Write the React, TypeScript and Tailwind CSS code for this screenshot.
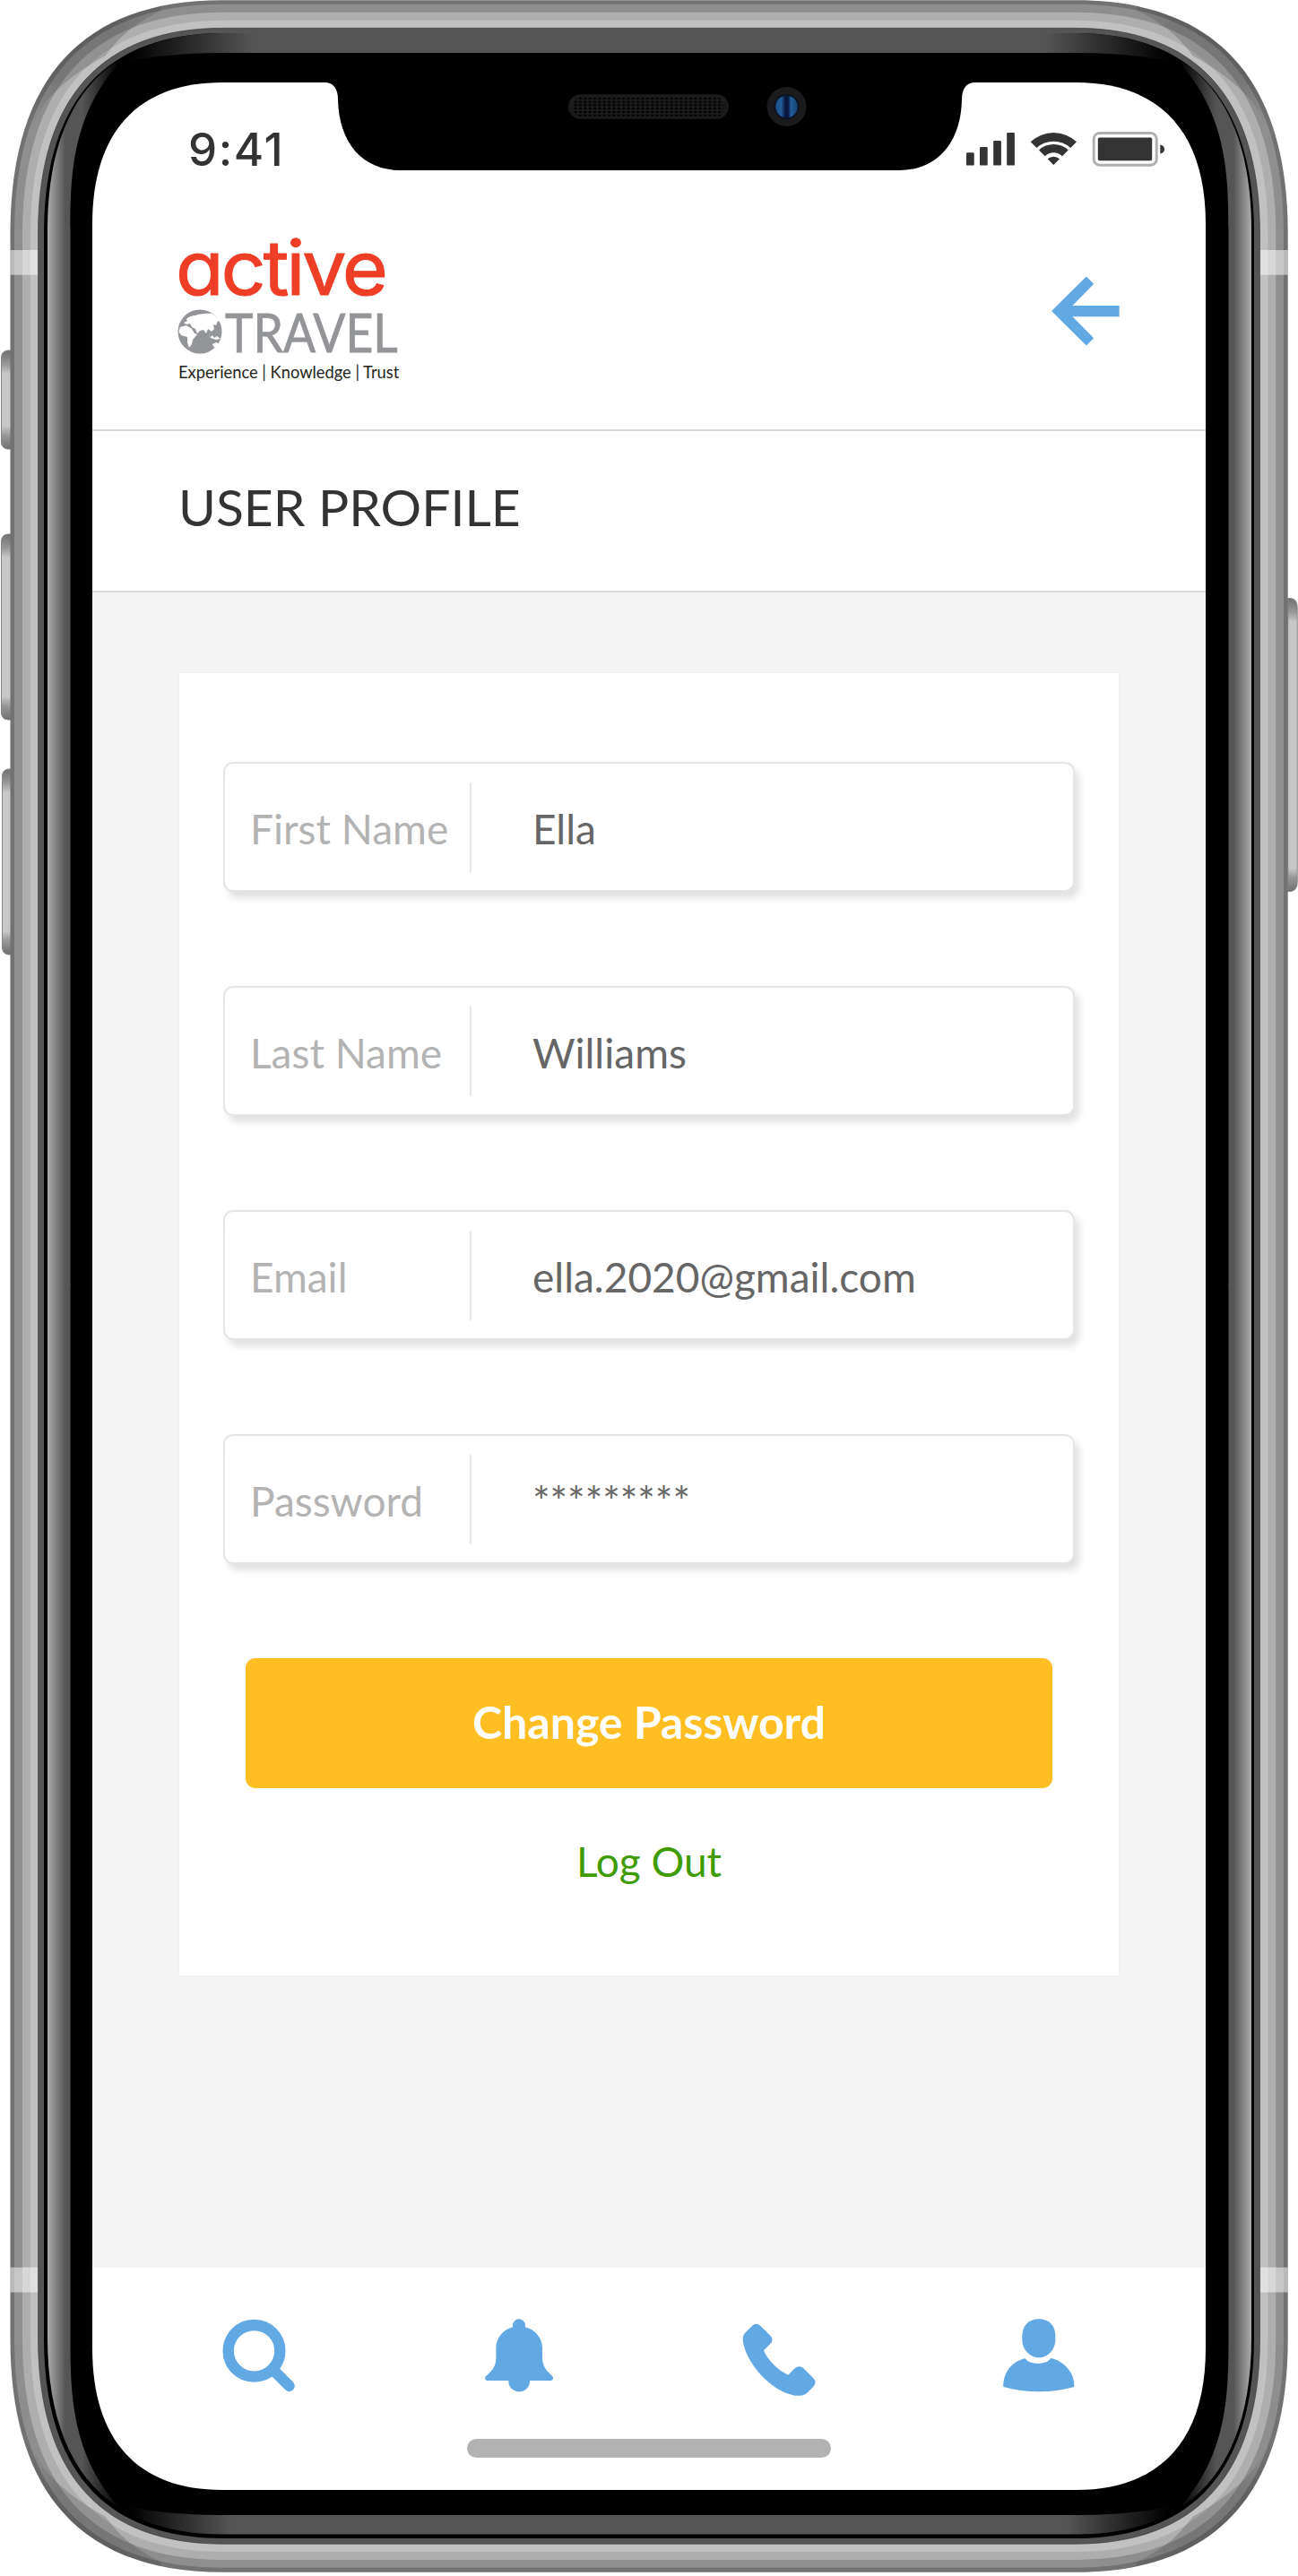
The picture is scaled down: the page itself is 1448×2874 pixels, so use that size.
import React from "react";

const BLUE = "#62a8e5";

/** Builds a rounded-rectangle path with smooth, continuous corners. */
function smoothRect(x0: number, y0: number, x1: number, y1: number, ex: number, ey: number, k = 0.66) {
  const a = ex * (1 - k);
  const b = ey * (1 - k);
  return [
    `M${x0 + ex} ${y0}H${x1 - ex}`,
    `C${x1 - a} ${y0} ${x1} ${y0 + b} ${x1} ${y0 + ey}`,
    `V${y1 - ey}`,
    `C${x1} ${y1 - b} ${x1 - a} ${y1} ${x1 - ex} ${y1}`,
    `H${x0 + ex}`,
    `C${x0 + a} ${y1} ${x0} ${y1 - b} ${x0} ${y1 - ey}`,
    `V${y0 + ey}`,
    `C${x0} ${y0 + b} ${x0 + a} ${y0} ${x0 + ex} ${y0}Z`,
  ].join("");
}

const OUTER = smoothRect(11.5, 0.3, 1436.7, 2869.7, 236, 260);
const GLOSS = smoothRect(53, 37, 1396, 2827.5, 196, 220);
const SIDE = "M78.5 1435V260C78.5 195 80 128 135 68H30V1435Z";
const CAP = "M724 59H245C205 59 165 63 135 70V20H724Z";

function SideButton({ x, y, h, flip }: { x: number; y: number; h: number; flip?: boolean }) {
  const d = flip
    ? `M${x} ${y}h3q7.5 1 7.5 10v${h - 20}q0 9-7.5 10h-3Z`
    : `M${x + 11} ${y}h-4q-7 1-7 8v${h - 16}q0 7 7 8h4Z`;
  const edge = 26 / h;
  const id = `btn${x}-${y}`.replace(/\./g, "_");
  return (
    <g>
      <defs>
        <linearGradient id={id} x1="0" y1="0" x2="0" y2="1">
          <stop offset="0" stopColor="#707070" />
          <stop offset={edge * 0.6} stopColor="#989898" />
          <stop offset={edge} stopColor="#c8c8c8" />
          <stop offset={1 - edge} stopColor="#c8c8c8" />
          <stop offset={1 - edge * 0.6} stopColor="#989898" />
          <stop offset="1" stopColor="#707070" />
        </linearGradient>
      </defs>
      <path d={d} fill={`url(#${id})`} stroke="#858585" strokeWidth="1" />
    </g>
  );
}

function PhoneFrame() {
  return (
    <svg className="absolute inset-0" width="1448" height="2874" viewBox="0 0 1448 2874" aria-hidden="true">
      <defs>
        <clipPath id="outer"><path d={OUTER} /></clipPath>
        <clipPath id="gloss"><path d={GLOSS} /></clipPath>
        <linearGradient id="side" gradientUnits="userSpaceOnUse" x1="53" x2="133" y1="0" y2="0">
          <stop offset="0" stopColor="#ababab" />
          <stop offset="0.25" stopColor="#555" />
          <stop offset="0.48" stopColor="#555" />
          <stop offset="1" stopColor="#000" />
        </linearGradient>
        <linearGradient id="cap" gradientUnits="userSpaceOnUse" x1="145" x2="283" y1="0" y2="0">
          <stop offset="0" stopColor="#000" />
          <stop offset="1" stopColor="#555" />
        </linearGradient>
        <linearGradient id="capLow" gradientUnits="userSpaceOnUse" x1="145" x2="258" y1="0" y2="0">
          <stop offset="0" stopColor="#000" />
          <stop offset="1" stopColor="#555" />
        </linearGradient>
        <linearGradient id="shade" gradientUnits="userSpaceOnUse" x1="178" y1="10" x2="34" y2="142">
          <stop offset="0" stopColor="#000" stopOpacity="0.1" />
          <stop offset="0.25" stopColor="#000" stopOpacity="0.17" />
          <stop offset="0.7" stopColor="#000" stopOpacity="0.16" />
          <stop offset="1" stopColor="#000" stopOpacity="0" />
        </linearGradient>
        <linearGradient id="lens">
          <stop offset="0" stopColor="#184c82" />
          <stop offset="0.25" stopColor="#225d9b" />
          <stop offset="0.45" stopColor="#08133a" />
          <stop offset="0.58" stopColor="#0a1a48" />
          <stop offset="0.7" stopColor="#225d9b" />
          <stop offset="1" stopColor="#153f70" />
        </linearGradient>
        <pattern id="mesh" width="5.35" height="3.77" patternUnits="userSpaceOnUse" x="639.5" y="108">
          <rect width="3.2" height="2" x="1" y="0.9" fill="#000" />
        </pattern>
        <path
          id="cornerShade"
          d="M180 12C150 26 132 42 118 62C96 74 76 88 60 104C46 118 40 130 34 145L0 145V0H180Z"
          fill="url(#shade)"
        />
      </defs>

      <SideButton x={1.5} y={391} h={110} />
      <SideButton x={1.5} y={596} h={207} />
      <SideButton x={2.5} y={858} h={207} />
      <SideButton x={1436.7} y={667.5} h={327} flip />

      <path d={OUTER} fill="#727272" />
      <path d={smoothRect(16, 4.7, 1432, 2864.7, 232, 256)} fill="#8e8e8e" />
      <path d={smoothRect(25, 13.7, 1423.3, 2856, 224, 248)} fill="#aeaeae" />
      <path d={smoothRect(34, 22.8, 1414.5, 2847, 216, 240)} fill="#c1c1c1" />
      <g clipPath="url(#outer)">
        <use href="#cornerShade" />
        <use href="#cornerShade" transform="matrix(-1 0 0 1 1448.2 0)" />
        <use href="#cornerShade" transform="matrix(1 0 0 -1 0 2870)" />
        <use href="#cornerShade" transform="matrix(-1 0 0 -1 1448.2 2870)" />
        <g fill="#fff" fillOpacity="0.5">
          <rect x="11" y="279" width="32" height="27.7" />
          <rect x="1405" y="279" width="33" height="27.7" />
          <rect x="11" y="2529.7" width="32" height="27.8" />
          <rect x="1405" y="2529.7" width="33" height="27.8" />
        </g>
      </g>
      <path d={smoothRect(42.5, 31.3, 1405.5, 2838.3, 207, 230)} fill="#555" stroke="#333" strokeWidth="0.6" />
      <path d={smoothRect(49, 37, 1399, 2832, 200, 224)} fill="#000" />
      <g clipPath="url(#gloss)">
        <path d={CAP} fill="url(#cap)" />
        <path d={CAP} fill="url(#cap)" transform="matrix(-1 0 0 1 1448 0)" />
        <path d={CAP} fill="url(#capLow)" transform="matrix(1 0 0 -1 0 2865)" />
        <path d={CAP} fill="url(#capLow)" transform="matrix(-1 0 0 -1 1448 2865)" />
        <g fill="url(#side)">
          <path d={SIDE} />
          <path d={SIDE} transform="matrix(-1 0 0 1 1449 0)" />
          <path d={SIDE} transform="matrix(1 0 0 -1 0 2868)" />
          <path d={SIDE} transform="matrix(-1 0 0 -1 1449 2868)" />
        </g>
      </g>
      <path d={smoothRect(103, 92, 1345, 2778, 145, 158, 0.65)} fill="#fff" />

      <path
        d="M362 91V92C372 92 377 99 377 111C378 160 405 190 447 190H1003C1045 190 1072 160 1073 111C1073 99 1078 92 1088 92V91Z"
        fill="#000"
      />
      <rect x="634" y="105.3" width="179" height="27.5" rx="13.7" fill="#1b1b1d" />
      <rect x="639.5" y="108" width="168" height="22.6" rx="9" fill="url(#mesh)" />
      <circle cx="877.5" cy="119" r="22" fill="#1b1b1d" />
      <circle cx="877.5" cy="119" r="14" fill="#0c1220" />
      <circle cx="877.5" cy="119" r="12.3" fill="url(#lens)" />
    </svg>
  );
}

function StatusBar() {
  return (
    <div className="flex h-[57px] items-center justify-between pl-[107px] pr-[46px]">
      <span className="font-['Inter',sans-serif] text-[51px] leading-none font-medium tracking-[1.6px] text-[#333]">9:41</span>
      <svg width="221" height="40" viewBox="1078 147 221 40" fill="#333" aria-label="Signal, Wi-Fi and battery">
        <rect x="1078" y="170.3" width="8.7" height="14.3" rx="1.2" />
        <rect x="1093" y="164" width="8.7" height="20.6" rx="1.2" />
        <rect x="1108.2" y="157" width="8.7" height="27.6" rx="1.2" />
        <rect x="1123.2" y="148" width="8.7" height="36.6" rx="1.2" />
        <path d="M1149.7 158.3A37 37 0 0 1 1201 158.3L1194.2 165A28 28 0 0 0 1156.5 165Z" />
        <path d="M1159 167.5A23.5 23.5 0 0 1 1191.7 167.5L1185 174.2A14 14 0 0 0 1165.7 174.2Z" />
        <path d="M1168.7 177.2A10 10 0 0 1 1182 177.2L1175.3 184Z" />
        <rect x="1220.2" y="148.6" width="70" height="35.6" rx="6.5" fill="none" stroke="#b0b0b0" strokeWidth="3" />
        <rect x="1224.8" y="153.5" width="60.4" height="25.7" rx="1.8" />
        <path d="M1294.3 161.5V171.5Q1299 170.5 1299 166.5T1294.3 161.5Z" />
      </svg>
    </div>
  );
}

function Globe() {
  return (
    <svg width="50" height="50" viewBox="0 0 50 50" className="shrink-0" aria-hidden="true">
      <circle cx="25" cy="25" r="24.5" fill="#939598" />
      <g fill="#fff">
        <path d="M10 11C13 8 16 7 20 7C24 5 30 5 38 4.500C43 8 46 11 47.500 14L45 13L43 18L40 17L41 22L38 25L34 22L32 27L29 23L25 24L22 27L20 22L16 20L14 16L10 17L7 15L11 13Z" />
        <path d="M3 20L10 18L16 22L19 27L22 28L17 34L16 39L13 43L11 37L11 31L4 29L1.500 25Z" />
        <path d="M35 27L37 31L39 29L41 32L44 30L48 33L43 34L37 32Z" />
        <path d="M39 39L43 37L46 38L44 41L41 43Z" />
      </g>
    </svg>
  );
}

function Header() {
  return (
    <header className="flex h-[286px] items-start justify-between border-b-2 border-[#d8d8d8] pr-[96px] pl-[95px]">
      <div className="flex w-[260px] flex-col pt-[62px]">
        <span className="-ml-[2px] inline-block h-[88px] origin-left scale-x-[1.045] font-['Inter',sans-serif] text-[84px] leading-[84px] tracking-[-3px] text-[#ef3e26] [-webkit-text-stroke:1px_#ef3e26] [font-feature-settings:'cv11']">
          active
        </span>
        <div className="flex h-[50px] items-center">
          <Globe />
          <span className="ml-[3px] inline-block origin-left scale-x-[0.89] font-['Lato',sans-serif] text-[60px] leading-[50px] text-[#939598] [-webkit-text-stroke:0.8px_#939598]">
            TRAVEL
          </span>
        </div>
        <span className="pt-[2px] pl-px font-['Lato',sans-serif] text-[18.3px] leading-[36px] whitespace-nowrap text-[#231f20]">
          Experience | Knowledge | Trust
        </span>
      </div>
      <button aria-label="Back" className="mt-[113px]">
        <svg width="76" height="78" viewBox="617 926 227 232" fill={BLUE}>
          <path d="M617 1042 733 927 758 952 687 1024H843V1061H687L758 1132 733 1157Z" />
        </svg>
      </button>
    </header>
  );
}

function Field({ label, value }: { label: string; value: string }) {
  return (
    <div className="flex h-[145px] items-center rounded-[11px] border-2 border-[#e5e5e5] bg-white pl-[28px] shadow-[5px_7px_8px_rgba(0,0,0,0.12)]">
      <span className="w-[245px] pt-[5px] text-[#b3b3b3]">{label}</span>
      <span className="h-[100px] w-[2px] bg-[#e5e5e5]" />
      <span className="pt-[5px] pl-[68px] text-[#666]">{value}</span>
    </div>
  );
}

function NavBar() {
  return (
    <nav className="flex h-[248px] flex-col items-center pt-[57px]">
      <div className="flex w-[952px] justify-between">
        <svg width="82" height="82" viewBox="745 320 246 246" aria-label="Search">
          <circle cx="851.500" cy="427.500" r="86.500" fill="none" stroke={BLUE} strokeWidth="37" />
          <path d="M917 493L969 545" stroke={BLUE} strokeWidth="37" strokeLinecap="round" />
        </svg>
        <svg width="82" height="86" viewBox="174 320 246 258" fill={BLUE} aria-label="Notifications">
          <path d="M276 348V342A21 21 0 0 1 318 342V348C352 357 375 385 375 418V452C375 470 382 485 394 498L409 513C414 519 410 527 403 527H333V532C331 550 317 564 298 564S263 550 262 532V527H191C184 527 181 519 186 513L202 497C214 485 220 470 220 452V418C220 385 243 357 276 348Z" />
        </svg>
        <svg width="82" height="86" viewBox="1045 320 246 258" fill={BLUE} aria-label="Call">
          <path d="M1056 366L1078 344Q1092 330 1106 344L1139 376Q1152 390 1139 404L1117 426C1130 459 1166 494 1199 508L1221 486Q1236 473 1250 486L1283 519Q1296 533 1283 547L1262 568C1250 579 1235 578 1222 577C1145 567 1053 466 1047 390C1047 381 1048 374 1056 366Z" />
        </svg>
        <svg width="82" height="86" viewBox="452 320 246 258" fill={BLUE} aria-label="Profile">
          <path d="M575 321C610 321 630 345 630 377V391C630 423 604 450 575 450S519 423 519 391V377C519 345 540 321 575 321Z" />
          <path d="M530 453C540 475 603 476 614 452C657 460 696 500 693 548C620 569 530 569 456 548C454 500 487 461 530 453Z" />
        </svg>
      </div>
      <div className="mt-[48px] h-[21px] w-[406px] rounded-full bg-[#b2b2b2]" />
    </nav>
  );
}

export default function App() {
  return (
    <div className="relative h-[2874px] w-[1448px] overflow-hidden bg-white font-['Lato',sans-serif]">
      <PhoneFrame />
      <div className="relative ml-[103px] flex h-[2778px] w-[1242px] flex-col pt-[138px]">
        <StatusBar />
        <Header />
        <main className="flex flex-1 flex-col">
          <h1 className="flex h-[180px] items-center border-b-2 border-[#d8d8d8] pb-[10px] pl-[96px] text-[57px] leading-none text-[#333]">
            USER PROFILE
          </h1>
          <div className="flex-1 bg-[#f4f4f4] px-[96px] pt-[89px]">
            <section className="flex h-[1455px] flex-col border border-[#f0f0f0] bg-white px-[49px] pt-[99px] text-[46px] leading-[60px]">
              <div className="flex flex-col gap-[105px]">
                <Field label="First Name" value="Ella" />
                <Field label="Last Name" value="Williams" />
                <Field label="Email" value="ella.2020@gmail.com" />
                <Field label="Password" value="*********" />
              </div>
              <button className="mx-[25px] mt-[105px] h-[145px] rounded-[11px] bg-[#ffbf23] pb-[4px] text-[50px] font-bold text-white">
                Change Password
              </button>
              <a className="mt-[52px] text-center text-[#3f9c00]">Log Out</a>
            </section>
          </div>
        </main>
        <NavBar />
      </div>
    </div>
  );
}
